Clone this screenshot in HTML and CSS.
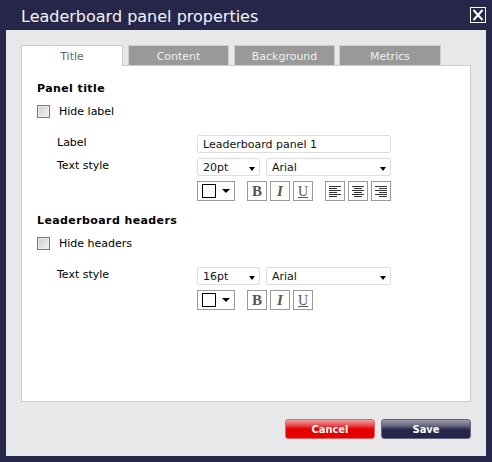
FILE: index.html
```html
<!DOCTYPE html>
<html lang="en">
<head>
  <meta charset="UTF-8">
  <title>Leaderboard panel properties</title>
  <link rel="stylesheet" href="styles.css">
</head>
<body>
  <div class="dialog">
    <div class="title-bar">
      <span class="title">Leaderboard panel properties</span>
      <div class="close">
        <svg width="16" height="16" viewBox="0 0 16 16"><rect x="0.5" y="0.5" width="15" height="15" fill="none" stroke="#fff"/><path d="M3.5 3 L12.5 13 M12.5 3 L3.5 13" stroke="#fff" stroke-width="2"/></svg>
      </div>
    </div>
    <div class="dialog-body">
      <div class="tabs">
        <div class="tab active">Title</div>
        <div class="tab">Content</div>
        <div class="tab">Background</div>
        <div class="tab">Metrics</div>
      </div>
      <div class="panel">
        <h3 class="section-title">Panel title</h3>
        <label class="check"><span class="checkbox"></span>Hide label</label>
        <div class="form-row label-row">
          <span class="row-label">Label</span>
          <div class="text-input">Leaderboard panel 1</div>
        </div>
        <div class="form-row style-row">
          <span class="row-label">Text style</span>
          <div class="controls">
            <div class="selects">
              <div class="select size">20pt<span class="arrow"></span></div>
              <div class="select family">Arial<span class="arrow"></span></div>
            </div>
            <div class="toolbar">
              <div class="tool colour"><span class="swatch"></span><span class="arrow"></span></div>
              <div class="tool-group">
                <div class="tool fmt bold">B</div>
                <div class="tool fmt italic">I</div>
                <div class="tool fmt under">U</div>
              </div>
              <div class="tool-group">
                <div class="tool"><svg width="14" height="13" viewBox="0 0 14 13"><path d="M1 1.5H13M1 3.5H9M1 5.5H13M1 7.5H9M1 9.5H13M1 11.5H9" stroke="#333"/></svg></div>
                <div class="tool"><svg width="14" height="13" viewBox="0 0 14 13"><path d="M1 1.5H13M3 3.5H11M1 5.5H13M3 7.5H11M1 9.5H13M3 11.5H11" stroke="#333"/></svg></div>
                <div class="tool"><svg width="14" height="13" viewBox="0 0 14 13"><path d="M1 1.5H13M5 3.5H13M1 5.5H13M5 7.5H13M1 9.5H13M5 11.5H13" stroke="#333"/></svg></div>
              </div>
            </div>
          </div>
        </div>

        <h3 class="section-title second">Leaderboard headers</h3>
        <label class="check"><span class="checkbox"></span>Hide headers</label>
        <div class="form-row style-row first">
          <span class="row-label">Text style</span>
          <div class="controls">
            <div class="selects">
              <div class="select size">16pt<span class="arrow"></span></div>
              <div class="select family">Arial<span class="arrow"></span></div>
            </div>
            <div class="toolbar">
              <div class="tool colour"><span class="swatch"></span><span class="arrow"></span></div>
              <div class="tool-group">
                <div class="tool fmt bold">B</div>
                <div class="tool fmt italic">I</div>
                <div class="tool fmt under">U</div>
              </div>
            </div>
          </div>
        </div>
      </div>
      <div class="actions">
        <div class="btn cancel">Cancel</div>
        <div class="btn save">Save</div>
      </div>
    </div>
  </div>
</body>
</html>
```
FILE: styles.css
```css
body {
  margin: 0;
  background: #26264a;
  font-family: "DejaVu Sans", Verdana, sans-serif;
  font-size: 11px;
  color: #000;
  overflow: hidden;
}

.dialog {
  width: 480px;
  height: 456px;
  margin: 0 6px;
}

.title-bar {
  height: 30px;
  display: flex;
  align-items: flex-start;
  justify-content: space-between;
}

.title {
  margin: 6px 0 0 15px;
  font-size: 16px;
  line-height: 22px;
  color: #f2f4fa;
}

.close {
  margin-top: 7px;
  height: 16px;
}

.dialog-body {
  height: 426px;
  background: #e8e8ea;
  padding: 15px 15px 0;
  box-sizing: border-box;
}

.tabs {
  display: flex;
  gap: 5px;
  height: 20px;
}

.tab {
  width: 101px;
  height: 20px;
  box-sizing: border-box;
  background: #999;
  border: 1px solid #ccc;
  border-bottom: none;
  color: #f0f0f0;
  text-align: center;
  line-height: 21px;
}

.tab:last-child {
  width: 102px;
  margin-left: -1px;
}

.tab.active {
  position: relative;
  width: 102px;
  height: 21px;
  background: #fff;
  color: #666;
  z-index: 1;
}

.panel {
  width: 450px;
  height: 337px;
  box-sizing: border-box;
  background: #fff;
  border: 1px solid #ccc;
  padding: 16px 15px 0;
}

.section-title {
  margin: 0;
  font-size: 11px;
  line-height: 14px;
  font-weight: bold;
  letter-spacing: 0.4px;
}

.section-title.second {
  margin-top: 13px;
}

.check {
  display: flex;
  align-items: center;
  gap: 9px;
  margin-top: 8px;
  height: 14px;
}

.checkbox {
  width: 11px;
  height: 11px;
  border: 1px solid #777;
  background: linear-gradient(135deg, #c8ccd2, #f4f4f6);
  box-shadow: inset 0 0 0 1px #eee;
}

.form-row {
  display: flex;
  padding-left: 20px;
}

.row-label {
  width: 140px;
  padding-top: 1px;
  line-height: 14px;
}

.label-row {
  margin-top: 17px;
}

.style-row {
  margin-top: 5px;
}

.style-row.first {
  margin-top: 17px;
}

.text-input,
.select {
  position: relative;
  box-sizing: border-box;
  height: 18px;
  border: 1px solid #ddd;
  border-radius: 2px;
  background: #fff;
  line-height: 18px;
  padding-left: 5px;
  color: #111;
}

.text-input {
  width: 194px;
}

.selects {
  display: flex;
  gap: 6px;
}

.select.size {
  width: 63px;
}

.select.family {
  width: 125px;
}

.arrow {
  width: 0;
  height: 0;
  border-left: 4px solid transparent;
  border-right: 4px solid transparent;
  border-top: 4px solid #000;
}

.select .arrow {
  position: absolute;
  right: 4px;
  top: 8px;
  border-left-width: 3.5px;
  border-right-width: 3.5px;
}

.toolbar {
  display: flex;
  gap: 12px;
  margin-top: 5px;
}

.tool-group {
  display: flex;
  gap: 3px;
}

.tool {
  width: 20px;
  height: 20px;
  box-sizing: border-box;
  border: 1px solid #999;
  display: flex;
  align-items: center;
  justify-content: center;
  background: #fff;
}

.tool.colour {
  width: 38px;
  justify-content: flex-start;
  gap: 6px;
  padding-left: 4px;
}

.swatch {
  width: 12px;
  height: 12px;
  border: 1px solid #000;
}

.fmt {
  font-family: "Liberation Serif", serif;
  font-size: 15px;
  color: #555;
  line-height: 17px;
}

.bold {
  font-weight: bold;
}

.italic {
  font-weight: bold;
  font-style: italic;
}

.under {
  text-decoration: underline;
  font-size: 14px;
}

.actions {
  display: flex;
  justify-content: flex-end;
  gap: 6px;
  margin-top: 17px;
}

.btn {
  width: 90px;
  height: 20px;
  box-sizing: border-box;
  border-radius: 3px;
  text-align: center;
  color: #fff;
  font-family: "DejaVu Sans Condensed", "DejaVu Sans", sans-serif;
  font-weight: bold;
  line-height: 19px;
  border: 1px solid #999;
}

.cancel {
  background: linear-gradient(#f2a0a4 0, #e8484e 30%, #e60000 50%, #e60000 100%);
  border-color: #d66;
}

.save {
  background: linear-gradient(#9a9aac 0, #6a6a84 30%, #26264a 55%, #26264a 100%);
  border-color: #666680;
}
```
